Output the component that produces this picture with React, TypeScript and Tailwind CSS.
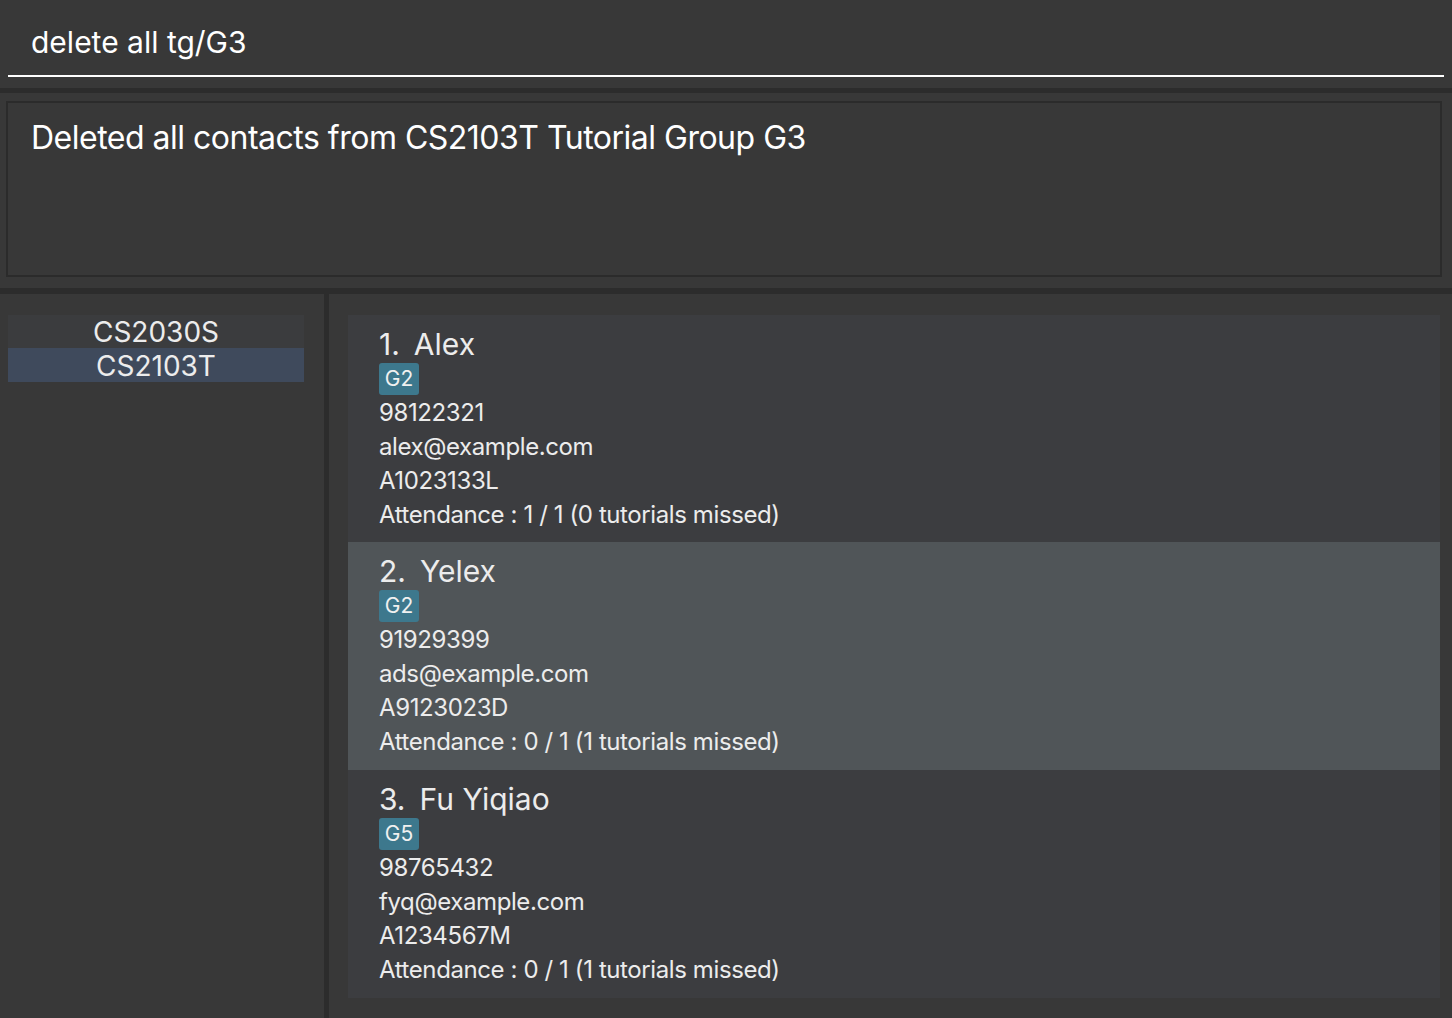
import React from 'react';

const font = { fontFamily: 'Inter, "Open Sans", "Liberation Sans", sans-serif' };

interface Person {
  name: string;
  tag: string;
  phone: string;
  email: string;
  id: string;
  attendance: string;
}

const persons: Person[] = [
  { name: 'Alex', tag: 'G2', phone: '98122321', email: 'alex@example.com', id: 'A1023133L', attendance: 'Attendance : 1 / 1 (0 tutorials missed)' },
  { name: 'Yelex', tag: 'G2', phone: '91929399', email: 'ads@example.com', id: 'A9123023D', attendance: 'Attendance : 0 / 1 (1 tutorials missed)' },
  { name: 'Fu Yiqiao', tag: 'G5', phone: '98765432', email: 'fyq@example.com', id: 'A1234567M', attendance: 'Attendance : 0 / 1 (1 tutorials missed)' },
];

const PersonCard = ({ p, index, selected }: { p: Person; index: number; selected: boolean }) => (
  <div
    className={`pl-[31px] pt-[12px] text-[#ececec] ${index === 1 ? 'h-[227px]' : 'h-[228px]'} ${
      selected ? 'bg-[#505558]' : 'bg-[#3c3d40]'
    }`}
  >
    <div className="h-[34px] text-[30px] leading-[34px] flex gap-[14px]">
      <span>{index}.</span>
      <span>{p.name}</span>
    </div>
    <div className="h-[35px] pt-[2px]">
      <span className="inline-flex h-[32px] w-[40px] items-center justify-center rounded-[3px] bg-[#3d788d] text-[21px] text-[#f0f0f0]">
        {p.tag}
      </span>
    </div>
    <div className="text-[24px] leading-[34px] tracking-[-0.4px]">
      <div>{p.phone}</div>
      <div>{p.email}</div>
      <div>{p.id}</div>
      <div>{p.attendance}</div>
    </div>
  </div>
);

export default function App() {
  return (
    <div className="w-[1452px] h-[1018px] bg-[#383838] flex flex-col overflow-hidden" style={font}>
      {/* command box */}
      <div className="h-[88px] px-[8px] pt-[16px]">
        <div className="h-[61px] border-b-2 border-white pl-[23px] text-[30px] leading-[52px] text-white">
          delete all tg/G3
        </div>
      </div>
      <div className="h-[5px] bg-[#2c2c2c]" />
      {/* result display */}
      <div className="h-[195px] pl-[6px] pr-[10px] pt-[8px]">
        <div className="h-[176px] border-2 border-[#2b2b2b] pl-[23px] pt-[14px] text-[32px] leading-[42px] tracking-[-0.5px] text-white">
          Deleted all contacts from CS2103T Tutorial Group G3
        </div>
      </div>
      <div className="h-[6px] bg-[#2c2c2c]" />
      {/* main */}
      <div className="flex flex-1">
        <div className="w-[324px] pl-[8px] pr-[20px] pt-[21px]">
          <div className="h-[33px] bg-[#3b3c3e] text-center text-[28px] leading-[35px] text-[#ececec]">CS2030S</div>
          <div className="h-[34px] bg-[#3f4a5c] text-center text-[28px] leading-[36px] text-[#ececec]">CS2103T</div>
        </div>
        <div className="w-[5px] bg-[#2c2c2c]" />
        <div className="flex-1 pl-[19px] pr-[12px] pt-[21px]">
          {persons.map((p, i) => (
            <PersonCard key={p.id} p={p} index={i + 1} selected={i === 1} />
          ))}
        </div>
      </div>
    </div>
  );
}
